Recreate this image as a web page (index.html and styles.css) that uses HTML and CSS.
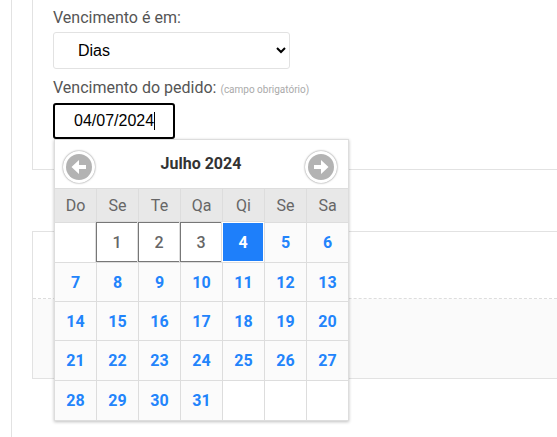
FILE: index.html
```html
<!DOCTYPE html>
<html lang="pt-BR">
<head>
    <meta charset="UTF-8">
    <title>Vencimento do pedido</title>
    <link rel="stylesheet" href="styles.css">
</head>
<body>

<div class="page">
    <!-- Dados do vencimento -->
    <div class="card card-form">
        <label class="label">Vencimento é em:</label>
        <select class="select">
            <option>Dias</option>
        </select>

        <label class="label label-date">Vencimento do pedido: <small>(campo obrigatório)</small></label>
        <div class="field">
            <div class="date-input">04/07/2024<span class="caret"></span></div>

            <!-- Calendário -->
            <div class="calendar">
                <div class="cal-head">
                    <a class="cal-nav">
                        <svg width="26" height="26" viewBox="0 0 26 26"><circle cx="13" cy="13" r="13" fill="#b3b3b3"/><path d="M20 11h-7V6l-7.500 7 7.500 7v-5h7z" fill="#fff"/></svg>
                    </a>
                    <span class="cal-title">Julho 2024</span>
                    <a class="cal-nav">
                        <svg width="26" height="26" viewBox="0 0 26 26"><circle cx="13" cy="13" r="13" fill="#b3b3b3"/><path d="M6 11h7V6l7.500 7-7.500 7v-5H6z" fill="#fff"/></svg>
                    </a>
                </div>
                <div class="cal-grid">
                    <div class="week">Do</div><div class="week">Se</div><div class="week">Te</div><div class="week">Qa</div><div class="week">Qi</div><div class="week">Se</div><div class="week">Sa</div>

                    <div class="day empty"></div><div class="day past">1</div><div class="day past">2</div><div class="day past">3</div><div class="day active">4</div><div class="day">5</div><div class="day">6</div>
                    <div class="day">7</div><div class="day">8</div><div class="day">9</div><div class="day">10</div><div class="day">11</div><div class="day">12</div><div class="day">13</div>
                    <div class="day">14</div><div class="day">15</div><div class="day">16</div><div class="day">17</div><div class="day">18</div><div class="day">19</div><div class="day">20</div>
                    <div class="day">21</div><div class="day">22</div><div class="day">23</div><div class="day">24</div><div class="day">25</div><div class="day">26</div><div class="day">27</div>
                    <div class="day">28</div><div class="day">29</div><div class="day">30</div><div class="day">31</div><div class="day empty"></div><div class="day empty"></div><div class="day empty"></div>
                </div>
            </div>
        </div>
    </div>

    <!-- Segundo bloco, coberto pelo calendário -->
    <div class="card card-second">
        <div class="card-body"></div>
        <div class="card-foot"></div>
    </div>
</div>

</body>
</html>
```

FILE: styles.css
```css
/* Estilo geral */
html, body {
    margin: 0;
    height: 437px;
    overflow: hidden;
    background-color: #fff;
}
body {
    font-family: Roboto, Arial, sans-serif;
    font-size: 16px;
    color: #555;
}
.page {
    box-sizing: border-box;
    height: 437px;
    margin-left: 11px;
    padding-left: 20px;
    border-left: 1px solid #e2e2e2;
}
.card {
    border: 1px solid #e2e2e2;
    border-right: none;
}

/* Formulário */
.card-form {
    box-sizing: border-box;
    height: 170px;
    border-top: none;
    padding: 8px 0 0 20px;
}
.label {
    display: block;
    height: 24px;
    line-height: 20px;
}
.label small {
    font-size: 10px;
    color: #aaa;
}
.label-date {
    height: 25px;
    margin-top: 9px;
}
.select {
    display: block;
    box-sizing: border-box;
    width: 237px;
    height: 37px;
    padding-left: 20px;
    border: 1px solid #e2e2e2;
    border-radius: 3px;
    background-color: #fff;
    font-family: "Liberation Sans", Arial, sans-serif;
    font-size: 16px;
    color: #000;
}
.field {
    position: relative;
}
.date-input {
    box-sizing: border-box;
    width: 122px;
    height: 36px;
    padding-left: 19px;
    border: 2px solid #000;
    border-radius: 3px;
    font-family: "Liberation Sans", Arial, sans-serif;
    line-height: 32px;
    color: #000;
}
.caret {
    display: inline-block;
    width: 1px;
    height: 18px;
    background-color: #000;
    vertical-align: -4px;
}

/* Calendário */
.calendar {
    position: absolute;
    top: 36px;
    left: 1px;
    width: 295px;
    box-sizing: border-box;
    background-color: #fff;
    border: 1px solid #ddd;
    box-shadow: 0 1px 3px rgba(0, 0, 0, 0.25);
}
.cal-head {
    display: flex;
    align-items: center;
    justify-content: space-between;
    height: 48px;
    padding: 0 11px 0 8px;
}
.cal-title {
    margin: 0 0 2px 2px;
    font-weight: bold;
    color: #333;
}
.cal-nav {
    display: flex;
    align-items: center;
    justify-content: center;
    width: 32px;
    height: 32px;
    margin-top: 5px;
    border-radius: 50%;
    background-color: #fff;
    box-shadow: 0 0 2px rgba(0, 0, 0, 0.55);
}
.cal-grid {
    display: grid;
    grid-template-columns: 41px 42px 42px 42px 42px 42px 42px;
    grid-template-rows: 34px 40px 39px 39px 40px 40px;
}
.week {
    display: flex;
    align-items: center;
    justify-content: center;
    background-color: #e8e8e8;
    border-top: 1px solid #ddd;
    border-left: 1px solid #ddd;
    color: #666;
}
.day {
    display: flex;
    align-items: center;
    justify-content: center;
    background-color: #fbfbfb;
    border-top: 1px solid #ddd;
    border-left: 1px solid #ddd;
    font-weight: bold;
    color: #2284fb;
}
.week:nth-child(7n+1), .day:nth-child(7n+1) {
    border-left: none;
}
.day.empty {
    background-color: #fff;
}
.day.past {
    background-color: #fff;
    border: 1px solid #777;
    outline: 1px solid #ddd;
    font-weight: 500;
    color: #666;
}
.day.active {
    background-color: #1e7ffa;
    border: 1px solid #fff;
    outline: 1px solid #ddd;
    color: #fff;
}

/* Segundo bloco */
.card-second {
    margin-top: 61px;
    height: 146px;
}
.card-body {
    height: 66px;
    border-bottom: 1px dashed #ddd;
}
.card-foot {
    height: 79px;
    background-color: #fafafa;
}
```
